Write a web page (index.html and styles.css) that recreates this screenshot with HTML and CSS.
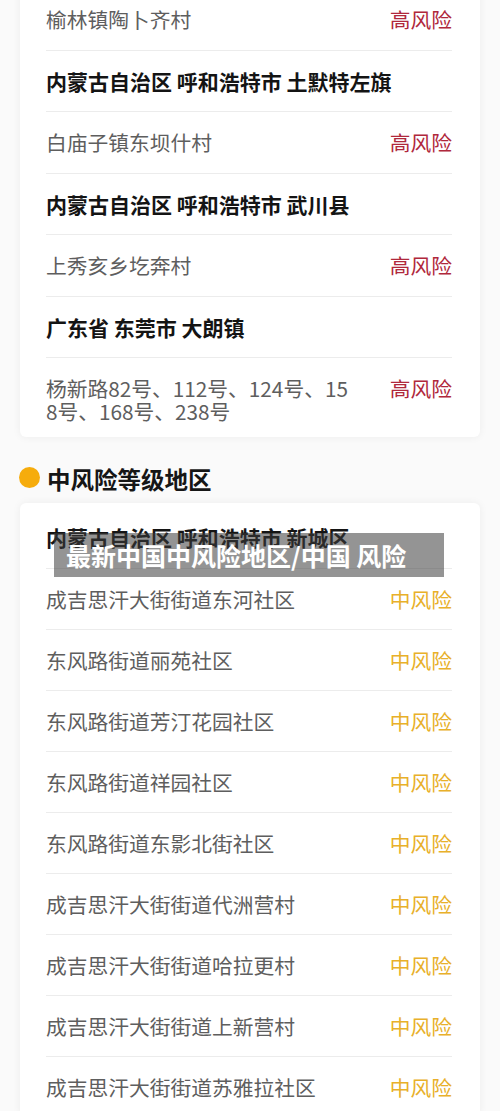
FILE: index.html
```html
<!DOCTYPE html>
<html lang="zh">
<head>
<meta charset="utf-8">
<link rel="stylesheet" href="styles.css">
</head>
<body>
<div class="page">
  <div class="card card-high">
    <div class="row"><span class="place">榆林镇陶卜齐村</span><span class="level high">高风险</span></div>
    <div class="row"><span class="region">内蒙古自治区 呼和浩特市 土默特左旗</span></div>
    <div class="row"><span class="place">白庙子镇东坝什村</span><span class="level high">高风险</span></div>
    <div class="row"><span class="region">内蒙古自治区 呼和浩特市 武川县</span></div>
    <div class="row"><span class="place">上秀亥乡圪奔村</span><span class="level high">高风险</span></div>
    <div class="row"><span class="region">广东省 东莞市 大朗镇</span></div>
    <div class="row"><span class="place place-wrap">杨新路82号、112号、124号、158号、168号、238号</span><span class="level high">高风险</span></div>
  </div>

  <div class="section-title"><span class="dot"></span><h2>中风险等级地区</h2></div>

  <div class="card card-mid">
    <div class="row"><span class="region">内蒙古自治区 呼和浩特市 新城区</span></div>
    <div class="row"><span class="place">成吉思汗大街街道东河社区</span><span class="level mid">中风险</span></div>
    <div class="row"><span class="place">东风路街道丽苑社区</span><span class="level mid">中风险</span></div>
    <div class="row"><span class="place">东风路街道芳汀花园社区</span><span class="level mid">中风险</span></div>
    <div class="row"><span class="place">东风路街道祥园社区</span><span class="level mid">中风险</span></div>
    <div class="row"><span class="place">东风路街道东影北街社区</span><span class="level mid">中风险</span></div>
    <div class="row"><span class="place">成吉思汗大街街道代洲营村</span><span class="level mid">中风险</span></div>
    <div class="row"><span class="place">成吉思汗大街街道哈拉更村</span><span class="level mid">中风险</span></div>
    <div class="row"><span class="place">成吉思汗大街街道上新营村</span><span class="level mid">中风险</span></div>
    <div class="row"><span class="place">成吉思汗大街街道苏雅拉社区</span><span class="level mid">中风险</span></div>
  </div>
</div>
<div class="banner">最新中国中风险地区/中国 风险</div>
</body>
</html>
```

FILE: styles.css
```css
html, body {
  margin: 0;
  padding: 0;
}
body {
  position: relative;
  width: 500px;
  height: 1111px;
  overflow: hidden;
  background: #fafafa;
  font-family: "Noto Sans CJK SC", "Noto Sans", sans-serif;
}
.page {
  display: flex;
  flex-direction: column;
}
.card {
  margin: 0 20px;
  padding: 0 28px 0 26px;
  background: #ffffff;
  border-radius: 6px;
  box-shadow: 0 0 8px rgba(0, 0, 0, 0.06);
}
.card-high {
  margin-top: -11px;
  border-radius: 0 0 6px 6px;
}
.card-mid {
  padding-top: 4px;
}
.row {
  display: flex;
  justify-content: space-between;
  align-items: flex-start;
  padding: 19px 0 18.5px;
  border-bottom: 1px solid #ececec;
  font-size: 20.75px;
  line-height: 23px;
}
.card-mid .row {
  padding-bottom: 18px;
}
.card-mid .row:first-child {
  padding-bottom: 19px;
}
.row:last-child {
  border-bottom: none;
}
.card-high .row:last-child {
  padding-bottom: 14px;
}
.place {
  color: #5e5e5e;
}
.place-wrap {
  width: 308px;
  word-break: break-all;
}
.region {
  color: #141414;
  font-weight: 700;
  font-size: 21px;
}
.level {
  flex-shrink: 0;
}
.high {
  color: #b0283c;
}
.mid {
  color: #e8b02a;
}
.section-title {
  display: flex;
  align-items: center;
  gap: 7px;
  padding: 28px 0 10px 19px;
}
.dot {
  width: 21px;
  height: 21px;
  border-radius: 50%;
  background: #f6ac0c;
  margin-top: -4px;
}
.section-title h2 {
  margin: 0;
  font-size: 23.5px;
  line-height: 28px;
  font-weight: 700;
  color: #161616;
}
.banner {
  position: absolute;
  left: 54px;
  top: 533px;
  width: 378px;
  height: 44px;
  padding-left: 12px;
  background: rgba(60, 60, 60, 0.55);
  color: #ffffff;
  font-size: 25px;
  font-weight: 700;
  line-height: 44px;
  white-space: nowrap;
}
```
